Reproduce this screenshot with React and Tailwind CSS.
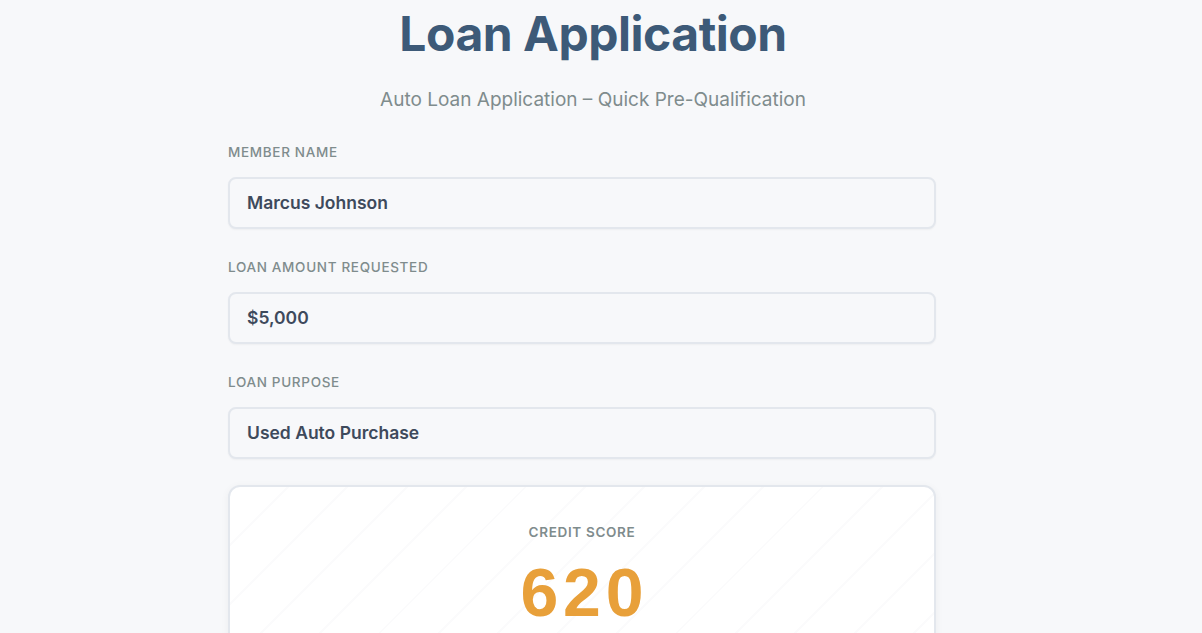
import React from 'react'

const fields = [
  { label: 'Member Name', value: 'Marcus Johnson' },
  { label: 'Loan Amount Requested', value: '$5,000' },
  { label: 'Loan Purpose', value: 'Used Auto Purchase' },
]

function Field({ label, value }) {
  return (
    <div className="mb-[28px]">
      <div className="text-[13.5px] font-medium uppercase tracking-[0.05em] text-[#7f8c8d] leading-[20px] mb-[15px]">
        {label}
      </div>
      <div className="h-[52px] flex items-center px-[17px] rounded-lg border-2 border-[#e3e7ed] bg-[#f7f8fa] shadow-[0_1px_2px_rgba(0,0,0,0.04)]">
        <span className="text-[17.5px] font-semibold text-[#3e4a5c]">{value}</span>
      </div>
    </div>
  )
}

export default function App() {
  return (
    <div className="min-h-screen bg-[#f7f8fa] overflow-hidden" style={{ fontFamily: 'Inter, "Noto Sans", sans-serif' }}>
      <div className="w-[1186px]">
        <h1 className="text-center text-[48px] font-bold text-[#3d5a78] leading-[60px] pt-[4px] tracking-[-0.01em]">
          Loan Application
        </h1>
        <p className="text-center text-[19px] text-[#7f8c8d] mt-[21px] leading-[30px]">
          Auto Loan Application – Quick Pre-Qualification
        </p>
        <div className="w-[730px] mx-auto pr-[22px] mt-[27px]">
          {fields.map((f) => (
            <Field key={f.label} label={f.label} value={f.value} />
          ))}
          <div className="-mt-[2px] rounded-xl border-2 border-[#e3e7ed] bg-white bg-[repeating-linear-gradient(135deg,#ffffff_0px,#ffffff_40px,#fbfbfc_40px,#fbfbfc_42px)] shadow-[0_2px_8px_rgba(0,0,0,0.05)] pt-[35px] pb-[40px] flex flex-col items-center">
            <div className="text-[13.5px] font-semibold uppercase tracking-[0.05em] text-[#7f8c8d] leading-[20px]">
              Credit Score
            </div>
            <div
              className="mt-[12px] text-[68px] font-bold text-[#e8a03a] leading-[76px] tracking-[0.07em] pl-[0.07em]"
              style={{ fontFamily: '"Liberation Sans", Arial, sans-serif' }}
            >
              620
            </div>
          </div>
        </div>
      </div>
    </div>
  )
}
